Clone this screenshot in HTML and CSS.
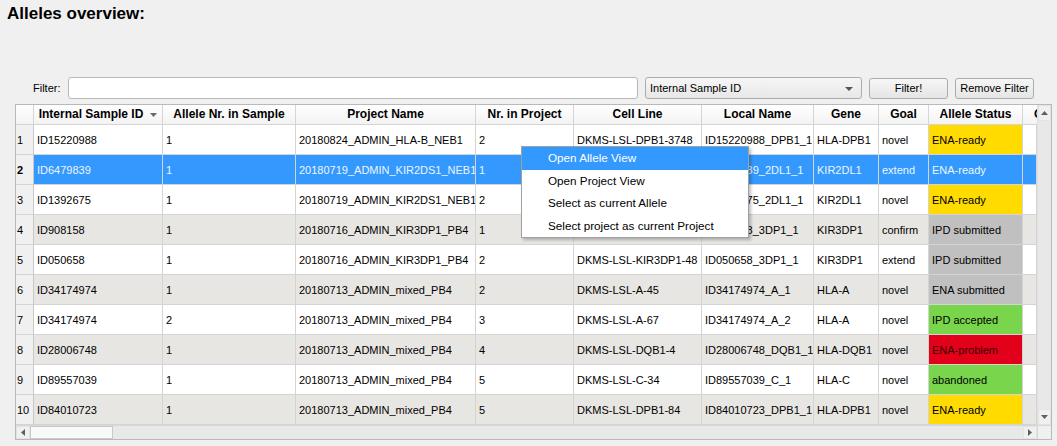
FILE: index.html
```html
<!DOCTYPE html>
<html>
<head>
<meta charset="utf-8">
<link rel="stylesheet" href="styles.css">
</head>
<body>
<div class="page">
  <h1 class="title">Alleles overview:</h1>
  <div class="filterbar">
    <span class="flabel">Filter:</span>
    <div class="finput"></div>
    <div class="combo"><span>Internal Sample ID</span><svg class="carrow" width="8" height="4" viewBox="0 0 8 4"><path d="M0 0h8L4 4z" fill="#555"/></svg></div>
    <div class="btn">Filter!</div>
    <div class="btn">Remove Filter</div>
  </div>
  <div class="table">
    <div class="tmain">
      <div class="grid">
        <div class="hd rh"></div>
        <div class="hd sorted">Internal Sample ID<svg class="sortind" width="7" height="4" viewBox="0 0 7 4"><path d="M0 0h7L3.5 4z" fill="#6a6a6a"/></svg></div>
        <div class="hd">Allele Nr. in Sample</div>
        <div class="hd">Project Name</div>
        <div class="hd">Nr. in Project</div>
        <div class="hd">Cell Line</div>
        <div class="hd">Local Name</div>
        <div class="hd">Gene</div>
        <div class="hd">Goal</div>
        <div class="hd">Allele Status</div>
        <div class="hd part"><span>C</span></div>

        <div class="c rh">1</div><div class="c">ID15220988</div><div class="c">1</div><div class="c">20180824_ADMIN_HLA-B_NEB1</div><div class="c">2</div><div class="c">DKMS-LSL-DPB1-3748</div><div class="c">ID15220988_DPB1_1</div><div class="c">HLA-DPB1</div><div class="c">novel</div><div class="c st yellow">ENA-ready</div><div class="c"></div>

        <div class="c rh selh">2</div><div class="c sel">ID6479839</div><div class="c sel">1</div><div class="c sel">20180719_ADMIN_KIR2DS1_NEB1</div><div class="c sel">1</div><div class="c sel"></div><div class="c sel">ID6479839_2DL1_1</div><div class="c sel">KIR2DL1</div><div class="c sel">extend</div><div class="c sel">ENA-ready</div><div class="c sel"></div>

        <div class="c rh">3</div><div class="c">ID1392675</div><div class="c">1</div><div class="c">20180719_ADMIN_KIR2DS1_NEB1</div><div class="c">2</div><div class="c"></div><div class="c">ID1392675_2DL1_1</div><div class="c">KIR2DL1</div><div class="c">novel</div><div class="c st yellow">ENA-ready</div><div class="c"></div>

        <div class="c rh">4</div><div class="c alt">ID908158</div><div class="c alt">1</div><div class="c alt">20180716_ADMIN_KIR3DP1_PB4</div><div class="c alt">1</div><div class="c alt"></div><div class="c alt">ID908158_3DP1_1</div><div class="c alt">KIR3DP1</div><div class="c alt">confirm</div><div class="c st grey">IPD submitted</div><div class="c alt"></div>

        <div class="c rh">5</div><div class="c">ID050658</div><div class="c">1</div><div class="c">20180716_ADMIN_KIR3DP1_PB4</div><div class="c">2</div><div class="c">DKMS-LSL-KIR3DP1-48</div><div class="c">ID050658_3DP1_1</div><div class="c">KIR3DP1</div><div class="c">extend</div><div class="c st grey">IPD submitted</div><div class="c"></div>

        <div class="c rh">6</div><div class="c alt">ID34174974</div><div class="c alt">1</div><div class="c alt">20180713_ADMIN_mixed_PB4</div><div class="c alt">2</div><div class="c alt">DKMS-LSL-A-45</div><div class="c alt">ID34174974_A_1</div><div class="c alt">HLA-A</div><div class="c alt">novel</div><div class="c st grey">ENA submitted</div><div class="c alt"></div>

        <div class="c rh">7</div><div class="c">ID34174974</div><div class="c">2</div><div class="c">20180713_ADMIN_mixed_PB4</div><div class="c">3</div><div class="c">DKMS-LSL-A-67</div><div class="c">ID34174974_A_2</div><div class="c">HLA-A</div><div class="c">novel</div><div class="c st green">IPD accepted</div><div class="c"></div>

        <div class="c rh">8</div><div class="c alt">ID28006748</div><div class="c alt">1</div><div class="c alt">20180713_ADMIN_mixed_PB4</div><div class="c alt">4</div><div class="c alt">DKMS-LSL-DQB1-4</div><div class="c alt">ID28006748_DQB1_1</div><div class="c alt">HLA-DQB1</div><div class="c alt">novel</div><div class="c st red">ENA-problem</div><div class="c alt"></div>

        <div class="c rh">9</div><div class="c">ID89557039</div><div class="c">1</div><div class="c">20180713_ADMIN_mixed_PB4</div><div class="c">5</div><div class="c">DKMS-LSL-C-34</div><div class="c">ID89557039_C_1</div><div class="c">HLA-C</div><div class="c">novel</div><div class="c st green">abandoned</div><div class="c"></div>

        <div class="c rh">10</div><div class="c alt">ID84010723</div><div class="c alt">1</div><div class="c alt">20180713_ADMIN_mixed_PB4</div><div class="c alt">5</div><div class="c alt">DKMS-LSL-DPB1-84</div><div class="c alt">ID84010723_DPB1_1</div><div class="c alt">HLA-DPB1</div><div class="c alt">novel</div><div class="c st yellow">ENA-ready</div><div class="c alt"></div>
      </div>
      <div class="vscroll">
        <div class="sbtn"><svg width="7" height="4" viewBox="0 0 7 4"><path d="M0 4h7L3.5 0z" fill="#606060"/></svg></div>
        <div class="vtrack"></div>
        <div class="sbtn"><svg width="7" height="4" viewBox="0 0 7 4"><path d="M0 0h7L3.5 4z" fill="#606060"/></svg></div>
      </div>
    </div>
    <div class="hrow">
      <div class="hscroll">
        <div class="sbtn h"><svg width="4" height="7" viewBox="0 0 4 7"><path d="M4 0v7L0 3.5z" fill="#606060"/></svg></div>
        <div class="hthumb"></div>
        <div class="htrack"></div>
        <div class="sbtn h"><svg width="4" height="7" viewBox="0 0 4 7"><path d="M0 0v7L4 3.5z" fill="#606060"/></svg></div>
      </div>
      <div class="corner"></div>
    </div>
  </div>
  <div class="menu">
    <div class="mi active">Open Allele View</div>
    <div class="mi">Open Project View</div>
    <div class="mi">Select as current Allele</div>
    <div class="mi">Select project as current Project</div>
  </div>
</div>
</body>
</html>
```
FILE: styles.css
```css
* { box-sizing: border-box; }
html, body { margin: 0; padding: 0; background: #f0f0f0; }
body { font-family: "Liberation Sans", Arial, sans-serif; font-size: 11px; color: #000; }
.page { position: relative; width: 1057px; height: 446px; overflow: hidden; }

.title { margin: 0; padding: 4px 0 0 7px; font-size: 17px; line-height: 20px; font-weight: bold; color: #000; }

.filterbar { display: flex; align-items: center; gap: 7px; margin-top: 53px; padding-left: 33px; height: 22px; }
.flabel { width: 28px; color: #000; }
.finput { width: 570px; height: 22px; background: #fff; border: 1px solid #b8b8b8; border-radius: 3px; }
.combo { position: relative; width: 217px; height: 22px; border: 1px solid #acacac; border-radius: 3px; background: linear-gradient(#f6f6f6, #e7e7e7); display: flex; align-items: center; padding-left: 4px; }
.carrow { position: absolute; right: 8px; top: 9px; }
.btn { width: 79px; height: 21px; border: 1px solid #acacac; border-radius: 3px; background: linear-gradient(#f6f6f6, #e5e5e5); display: flex; align-items: center; justify-content: center; }

.table { margin: 5px 0 0 15px; width: 1037px; height: 336px; border: 1px solid #b9b9b9; background: #fff; }
.tmain { display: flex; height: 320px; }
.grid { display: grid; width: 1021px; grid-template-columns: 18px 129px 133px 180px 98px 128px 112px 65px 50px 94px 14px; grid-template-rows: 20px repeat(10, 30px); overflow: hidden; }
.hd { position: relative; font-weight: bold; font-size: 12px; text-align: center; line-height: 19px; background: linear-gradient(#ffffff, #f3f3f3); border-right: 1px solid #d5d5d5; border-bottom: 1px solid #d5d5d5; white-space: nowrap; overflow: hidden; }
.hd.sorted { padding-right: 14px; }
.sortind { position: absolute; right: 5px; top: 8px; }
.hd.part { border-right: none; text-align: left; padding-left: 11px; }
.c { border-right: 1px solid #d4d4d4; border-bottom: 1px solid #d4d4d4; padding: 0 0 0 3px; display: flex; align-items: center; white-space: nowrap; overflow: hidden; background: #fff; }
.c.rh { background: #f0f0f0; padding-left: 1px; border-right-color: #c8c8c8; }
.c.rh.selh { font-weight: bold; }
.c.alt { background: #e8e6e2; }
.c.sel { background: #3399ff; color: #eef5ff; }
.c.yellow { background: #ffdb00; }
.c.grey { background: #c0c0c0; }
.c.green { background: #79d54b; }
.c.red { background: #e3001b; color: #3a0000; }

.vscroll { width: 14px; border-left: 1px solid #e0e0e0; background: #e8e8e8; display: flex; flex-direction: column; }
.sbtn { height: 16px; background: #f0f0f0; border: 1px solid #e3e3e3; display: flex; align-items: center; justify-content: center; flex: none; }
.vtrack { flex: 1; }
.hrow { display: flex; height: 14px; border-top: 1px solid #d8d8d8; }
.hscroll { width: 1021px; display: flex; background: #e8e8e8; }
.sbtn.h { width: 14px; height: 13px; }
.hthumb { width: 83px; background: #f9f9f9; border: 1px solid #c8c8c8; }
.htrack { flex: 1; }
.corner { width: 14px; background: #f0f0f0; border-left: 1px solid #d8d8d8; }

.menu { position: absolute; left: 521px; top: 146px; width: 228px; background: #fff; border: 1px solid #a0a0a0; box-shadow: 2px 2px 3px rgba(0,0,0,0.25); padding: 0; font-size: 11.7px; }
.mi { height: 22.5px; line-height: 22.5px; padding-left: 26px; color: #000; }
.mi.active { background: #3399ff; color: #fff; }
```
